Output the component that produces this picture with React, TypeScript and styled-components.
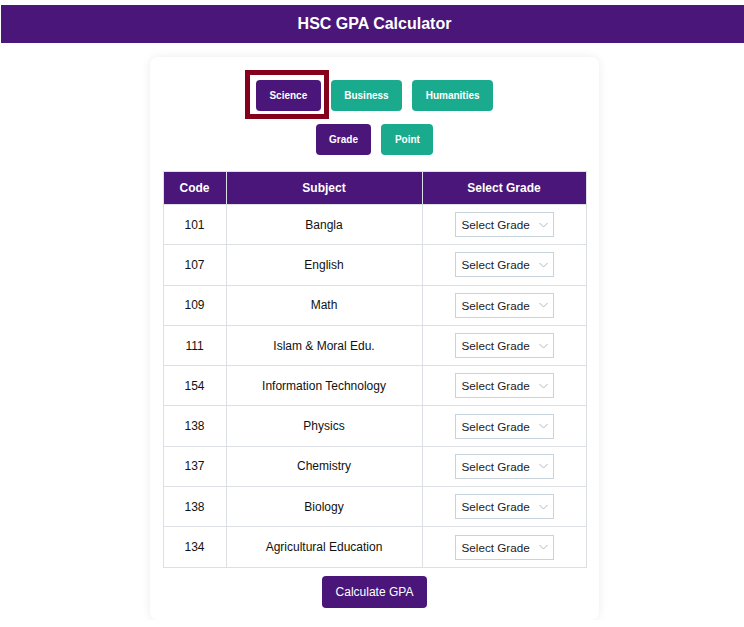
import React, { useState } from 'react';
import styled, { createGlobalStyle } from 'styled-components';

const PURPLE = '#4a1679';
const TEAL = '#1aab8e';

const GlobalStyle = createGlobalStyle`
  html, body {
    margin: 0;
    padding: 0;
    background: #ffffff;
    overflow-x: hidden;
  }

  body {
    font-family: 'Liberation Sans', Arial, sans-serif;
    color: #111;
  }
`;

const Page = styled.div`
  width: 748px;
  padding: 5px 0 0 1px;
  box-sizing: border-box;
`;

const Header = styled.header`
  background: ${PURPLE};
  color: #fff;
  height: 38px;
  display: flex;
  align-items: center;
  justify-content: center;
  font-size: 16px;
  font-weight: 700;
`;

const Card = styled.main`
  width: 449px;
  margin: 14px auto 0;
  padding: 13px 13px 12px;
  box-sizing: border-box;
  background: #fff;
  border-radius: 8px;
  box-shadow: 0 0 10px rgba(0, 0, 0, 0.08);
  display: flex;
  flex-direction: column;
  align-items: center;
`;

const ButtonRow = styled.div<{ $offset: number }>`
  display: flex;
  justify-content: center;
  gap: 10px;
  margin-top: ${(p) => p.$offset}px;
`;

const ToggleButton = styled.button<{ $active: boolean; $focused?: boolean }>`
  position: relative;
  height: 31px;
  padding: 0 13.5px;
  border: none;
  border-radius: 4px;
  background: ${(p) => (p.$active ? PURPLE : TEAL)};
  color: #fff;
  font-family: 'Liberation Sans', Arial, sans-serif;
  font-size: 10px;
  font-weight: 700;
  cursor: pointer;

  &::after {
    content: '';
    display: ${(p) => (p.$focused ? 'block' : 'none')};
    position: absolute;
    top: -10px;
    left: -11px;
    right: -8px;
    bottom: -8px;
    border: 5px solid #85001a;
    pointer-events: none;
  }
`;

const GradeTable = styled.table`
  width: 423px;
  margin-top: 16px;
  border-collapse: collapse;
  table-layout: fixed;
  font-size: 12px;
`;

const HeadCell = styled.th<{ $width: number }>`
  width: ${(p) => p.$width}px;
  height: 32px;
  padding: 0;
  background: ${PURPLE};
  color: #fff;
  font-weight: 700;
  font-size: 12px;
  text-align: center;
  border: 1px solid #dcdfe3;
`;

const Row = styled.tr`
  height: 40.3px;
`;

const Cell = styled.td`
  padding: 0;
  text-align: center;
  vertical-align: middle;
  border: 1px solid #dcdfe3;
  color: #111;
`;

const SelectWrap = styled.div`
  position: relative;
  display: inline-block;
  vertical-align: middle;
`;

const GradeSelect = styled.select`
  appearance: none;
  width: 99px;
  height: 25px;
  padding: 0 18px 0 6px;
  border: 1px solid #c9d3dc;
  border-radius: 0;
  background: #fff;
  color: #222;
  font-family: 'Liberation Sans', Arial, sans-serif;
  font-size: 11.7px;
  display: block;
`;

const Chevron = styled.svg`
  position: absolute;
  right: 6px;
  top: 50%;
  transform: translateY(-50%);
  pointer-events: none;
`;

const CalcButton = styled.button`
  margin-top: 8px;
  height: 32px;
  padding: 0 13.5px;
  border: none;
  border-radius: 4px;
  background: ${PURPLE};
  color: #fff;
  font-family: 'Liberation Sans', Arial, sans-serif;
  font-size: 12px;
  cursor: pointer;
`;

const subjects = [
  { code: '101', name: 'Bangla' },
  { code: '107', name: 'English' },
  { code: '109', name: 'Math' },
  { code: '111', name: 'Islam & Moral Edu.' },
  { code: '154', name: 'Information Technology' },
  { code: '138', name: 'Physics' },
  { code: '137', name: 'Chemistry' },
  { code: '138', name: 'Biology' },
  { code: '134', name: 'Agricultural Education' },
];

const grades = ['A+', 'A', 'A-', 'B', 'C', 'D', 'F'];

const App: React.FC = () => {
  const [stream, setStream] = useState('Science');
  const [mode, setMode] = useState('Grade');

  return (
    <Page>
      <GlobalStyle />
      <Header>HSC GPA Calculator</Header>
      <Card>
        <ButtonRow $offset={10}>
          {['Science', 'Business', 'Humanities'].map((s) => (
            <ToggleButton
              key={s}
              $active={stream === s}
              $focused={s === 'Science'}
              onClick={() => setStream(s)}
            >
              {s}
            </ToggleButton>
          ))}
        </ButtonRow>
        <ButtonRow $offset={13}>
          {['Grade', 'Point'].map((m) => (
            <ToggleButton key={m} $active={mode === m} onClick={() => setMode(m)}>
              {m}
            </ToggleButton>
          ))}
        </ButtonRow>

        <GradeTable>
          <thead>
            <tr>
              <HeadCell $width={62}>Code</HeadCell>
              <HeadCell $width={195}>Subject</HeadCell>
              <HeadCell $width={163}>Select Grade</HeadCell>
            </tr>
          </thead>
          <tbody>
            {subjects.map((s, i) => (
              <Row key={i}>
                <Cell>{s.code}</Cell>
                <Cell>{s.name}</Cell>
                <Cell>
                  <SelectWrap>
                    <GradeSelect defaultValue="">
                      <option value="" disabled>
                        Select Grade
                      </option>
                      {grades.map((g) => (
                        <option key={g} value={g}>
                          {g}
                        </option>
                      ))}
                    </GradeSelect>
                    <Chevron width="9" height="5" viewBox="0 0 9 5">
                      <path d="M0.5 0.5 L4.5 4.5 L8.5 0.5" fill="none" stroke="#b4b8bd" strokeWidth="1" />
                    </Chevron>
                  </SelectWrap>
                </Cell>
              </Row>
            ))}
          </tbody>
        </GradeTable>

        <CalcButton>Calculate GPA</CalcButton>
      </Card>
    </Page>
  );
};

export default App;
